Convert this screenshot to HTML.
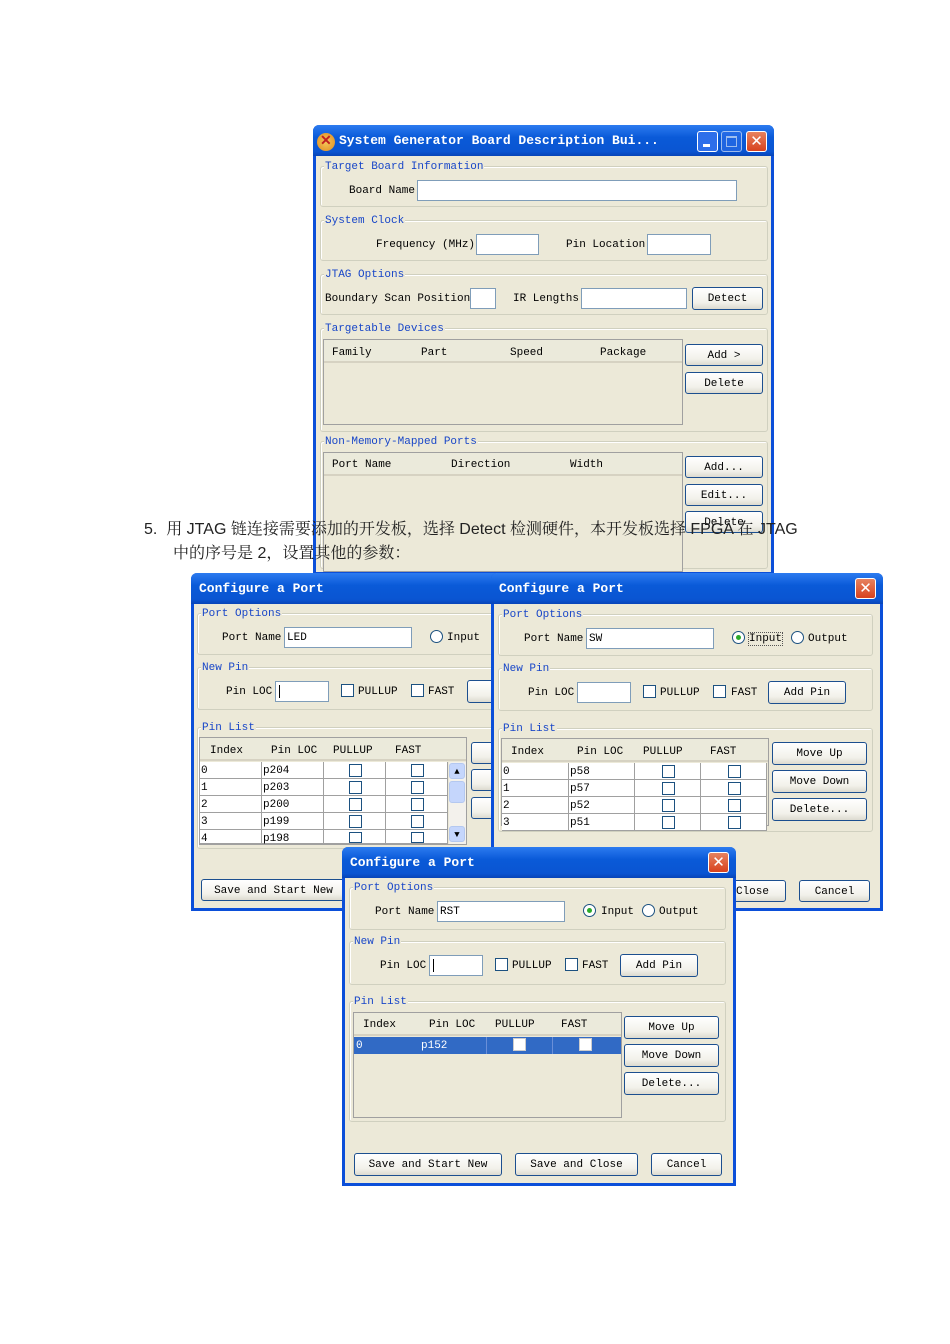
<!DOCTYPE html>
<html><head><meta charset="utf-8"><style>
body{margin:0;width:950px;height:1344px;background:#fff;position:relative;overflow:hidden;font-family:"Liberation Mono","Noto Sans CJK SC",monospace;font-size:11px;color:#000}
div,span{position:absolute;box-sizing:border-box}
.w{background:#ECE9D8;border:3px solid #0B4FD9;border-top:none;border-radius:6px 6px 0 0}
.tb{background:linear-gradient(#2C7BF0,#0A5AD8 40%,#0A55D2 85%,#0844B8);border-radius:6px 6px 0 0;color:#fff;font-weight:bold;font-size:13px;padding:0 0 0 8px;line-height:32px;white-space:nowrap}
.g{border:1px solid #D0D0BF;border-radius:3px;box-shadow:inset 1px 1px 0 #fff}
.gl{top:-7px;left:3px;background:#ECE9D8;color:#1846C8;padding:0 1px;white-space:nowrap;line-height:14px}
.in{background:#fff;border:1px solid #7F9DB9}
.bt{border:1px solid #1C4F8F;border-radius:3px;background:linear-gradient(#fff,#F2F1EA 70%,#DCDAD0);text-align:center;white-space:nowrap;padding-top:1px}
.t{white-space:nowrap;margin-top:2px}
.x{width:21px;height:21px;border:1px solid #fff;border-radius:3px;background:linear-gradient(#E6825F,#D8421E);color:#fff;font:bold 15px "DejaVu Sans",sans-serif;text-align:center;line-height:19px}
.cb{width:13px;height:13px;border:1px solid #1C5180;background:#fff}
.rd{width:13px;height:13px;border:1px solid #1C5180;border-radius:50%;background:#fff}
.rd.on::after{content:"";position:absolute;left:3px;top:3px;width:5px;height:5px;border-radius:50%;background:#2BAA2B}
.hd{background:#EBEADB;border-bottom:2px solid #D6D2C2}
.cell{background:#fff;border-right:1px solid #A0A0A0;border-bottom:1px solid #A0A0A0;white-space:nowrap;padding-left:1px;line-height:18px}
.cn{font-family:"Liberation Sans","Noto Serif CJK SC",serif;font-size:16px;color:#222;white-space:nowrap}
</style></head><body>

<!-- Window 1 -->
<div class="w" style="left:313px;top:125px;width:461px;height:450px"></div>
<div class="tb" style="left:313px;top:125px;width:461px;height:31px;padding-left:26px">System Generator Board Description Bui...</div>
<div style="left:317px;top:133px;width:18px;height:18px;border-radius:50%;background:radial-gradient(#F4C85A,#E08A20)"><span style="left:3px;top:-1px;color:#C02020;font:bold 14px sans-serif">✕</span></div>
<div style="left:697px;top:131px;width:21px;height:21px;border:1px solid #fff;border-radius:3px;background:#2E6FEA"><span style="left:5px;top:12px;width:7px;height:3px;background:#fff"></span></div>
<div style="left:721px;top:131px;width:21px;height:21px;border:1px solid #fff;border-radius:3px;background:#2E6FEA;opacity:.6"><span style="left:4px;top:4px;width:11px;height:11px;border:1px solid #fff;border-top-width:2px"></span></div>
<div class="x" style="left:746px;top:131px">✕</div>

<div class="g" style="left:320px;top:166px;width:448px;height:41px"><span class="gl">Target Board Information</span></div>
<span class="t" style="left:349px;top:183px">Board Name</span>
<div class="in" style="left:417px;top:180px;width:320px;height:21px"></div>

<div class="g" style="left:320px;top:220px;width:448px;height:41px"><span class="gl">System Clock</span></div>
<span class="t" style="left:376px;top:237px">Frequency (MHz)</span>
<div class="in" style="left:476px;top:234px;width:63px;height:21px"></div>
<span class="t" style="left:566px;top:237px">Pin Location</span>
<div class="in" style="left:647px;top:234px;width:64px;height:21px"></div>

<div class="g" style="left:320px;top:274px;width:448px;height:41px"><span class="gl">JTAG Options</span></div>
<span class="t" style="left:325px;top:291px">Boundary Scan Position</span>
<div class="in" style="left:470px;top:288px;width:26px;height:21px"></div>
<span class="t" style="left:513px;top:291px">IR Lengths</span>
<div class="in" style="left:581px;top:288px;width:106px;height:21px"></div>
<div class="bt" style="left:692px;top:287px;width:71px;height:23px;line-height:21px">Detect</div>

<div class="g" style="left:320px;top:328px;width:448px;height:104px"><span class="gl">Targetable Devices</span></div>
<div class="in" style="left:323px;top:339px;width:360px;height:86px;background:#ECE9D8;border-color:#A0A0A0"></div>
<div class="hd" style="left:324px;top:340px;width:358px;height:23px"></div>
<span class="t" style="left:332px;top:345px">Family</span><span class="t" style="left:421px;top:345px">Part</span><span class="t" style="left:510px;top:345px">Speed</span><span class="t" style="left:600px;top:345px">Package</span>
<div class="bt" style="left:685px;top:344px;width:78px;height:22px;line-height:20px">Add &gt;</div>
<div class="bt" style="left:685px;top:372px;width:78px;height:22px;line-height:20px">Delete</div>

<div class="g" style="left:320px;top:441px;width:448px;height:128px"><span class="gl">Non-Memory-Mapped Ports</span></div>
<div class="in" style="left:323px;top:452px;width:360px;height:120px;background:#ECE9D8;border-color:#A0A0A0"></div>
<div class="hd" style="left:324px;top:453px;width:358px;height:23px"></div>
<span class="t" style="left:332px;top:457px">Port Name</span><span class="t" style="left:451px;top:457px">Direction</span><span class="t" style="left:570px;top:457px">Width</span>
<div class="bt" style="left:685px;top:456px;width:78px;height:22px;line-height:20px">Add...</div>
<div class="bt" style="left:685px;top:484px;width:78px;height:22px;line-height:20px">Edit...</div>
<div class="bt" style="left:685px;top:511px;width:78px;height:22px;line-height:20px">Delete</div>

<span class="cn" style="left:144px;top:516px">5.&nbsp; 用 JTAG 链连接需要添加的开发板，选择 Detect 检测硬件，本开发板选择 FPGA 在 JTAG</span>
<span class="cn" style="left:173px;top:540px">中的序号是 2，设置其他的参数：</span>

<!-- Left dialog -->
<div class="w" style="left:191px;top:573px;width:310px;height:338px"></div>
<div class="tb" style="left:191px;top:573px;width:310px;height:31px">Configure a Port</div>
<div class="g" style="left:197px;top:613px;width:300px;height:42px"><span class="gl">Port Options</span></div>
<span class="t" style="left:222px;top:630px">Port Name</span>
<div class="in" style="left:284px;top:627px;width:128px;height:21px"><span style="left:2px;top:4px">LED</span></div>
<div class="rd" style="left:430px;top:630px"></div><span class="t" style="left:447px;top:630px">Input</span>
<div class="g" style="left:197px;top:667px;width:300px;height:43px"><span class="gl">New Pin</span></div>
<span class="t" style="left:226px;top:684px">Pin LOC</span>
<div class="in" style="left:275px;top:681px;width:54px;height:21px"><span style="left:3px;top:3px;width:1px;height:13px;background:#000"></span></div>
<div class="cb" style="left:341px;top:684px"></div><span class="t" style="left:358px;top:684px">PULLUP</span>
<div class="cb" style="left:411px;top:684px"></div><span class="t" style="left:428px;top:684px">FAST</span>
<div class="bt" style="left:467px;top:680px;width:40px;height:23px"></div>
<div class="g" style="left:197px;top:727px;width:300px;height:122px"><span class="gl">Pin List</span></div>
<div class="in" style="left:199px;top:737px;width:268px;height:108px;background:#ECE9D8;border-color:#A0A0A0"></div>
<div class="hd" style="left:200px;top:738px;width:266px;height:23px"></div>
<span class="t" style="left:210px;top:743px">Index</span><span class="t" style="left:271px;top:743px">Pin LOC</span><span class="t" style="left:333px;top:743px">PULLUP</span><span class="t" style="left:395px;top:743px">FAST</span>
<div class="cell" style="left:200px;top:762px;width:62px;height:17px">0</div><div class="cell" style="left:262px;top:762px;width:62px;height:17px">p204</div><div class="cell" style="left:324px;top:762px;width:62px;height:17px"></div><div class="cell" style="left:386px;top:762px;width:62px;height:17px"></div>
<div class="cell" style="left:200px;top:779px;width:62px;height:17px">1</div><div class="cell" style="left:262px;top:779px;width:62px;height:17px">p203</div><div class="cell" style="left:324px;top:779px;width:62px;height:17px"></div><div class="cell" style="left:386px;top:779px;width:62px;height:17px"></div>
<div class="cell" style="left:200px;top:796px;width:62px;height:17px">2</div><div class="cell" style="left:262px;top:796px;width:62px;height:17px">p200</div><div class="cell" style="left:324px;top:796px;width:62px;height:17px"></div><div class="cell" style="left:386px;top:796px;width:62px;height:17px"></div>
<div class="cell" style="left:200px;top:813px;width:62px;height:17px">3</div><div class="cell" style="left:262px;top:813px;width:62px;height:17px">p199</div><div class="cell" style="left:324px;top:813px;width:62px;height:17px"></div><div class="cell" style="left:386px;top:813px;width:62px;height:17px"></div>
<div class="cell" style="left:200px;top:830px;width:62px;height:14px">4</div><div class="cell" style="left:262px;top:830px;width:62px;height:14px">p198</div><div class="cell" style="left:324px;top:830px;width:62px;height:14px"></div><div class="cell" style="left:386px;top:830px;width:62px;height:14px"></div>
<div class="cb" style="left:349px;top:764px"></div><div class="cb" style="left:411px;top:764px"></div>
<div class="cb" style="left:349px;top:781px"></div><div class="cb" style="left:411px;top:781px"></div>
<div class="cb" style="left:349px;top:798px"></div><div class="cb" style="left:411px;top:798px"></div>
<div class="cb" style="left:349px;top:815px"></div><div class="cb" style="left:411px;top:815px"></div>
<div class="cb" style="left:349px;top:832px;height:11px"></div><div class="cb" style="left:411px;top:832px;height:11px"></div>
<div style="left:449px;top:762px;width:17px;height:82px;background:#F3F1EC"></div>
<div class="bt" style="left:449px;top:763px;width:16px;height:16px;font-size:9px;line-height:14px;border-color:#B4C8F0;background:#C5D6FC">▲</div>
<div class="bt" style="left:449px;top:781px;width:16px;height:22px;border-color:#B4C8F0;background:#C5D6FC"></div>
<div class="bt" style="left:449px;top:826px;width:16px;height:16px;font-size:9px;line-height:14px;border-color:#B4C8F0;background:#C5D6FC">▼</div>
<div class="bt" style="left:471px;top:742px;width:25px;height:22px"></div>
<div class="bt" style="left:471px;top:769px;width:25px;height:22px"></div>
<div class="bt" style="left:471px;top:797px;width:25px;height:22px"></div>
<div class="bt" style="left:201px;top:879px;width:145px;height:22px;line-height:20px">Save and Start New</div>

<!-- Right dialog -->
<div class="w" style="left:491px;top:573px;width:392px;height:338px"></div>
<div class="tb" style="left:491px;top:573px;width:392px;height:31px">Configure a Port</div>
<div class="x" style="left:855px;top:578px">✕</div>
<div class="g" style="left:498px;top:614px;width:375px;height:42px"><span class="gl">Port Options</span></div>
<span class="t" style="left:524px;top:631px">Port Name</span>
<div class="in" style="left:586px;top:628px;width:128px;height:21px"><span style="left:2px;top:4px">SW</span></div>
<div class="rd on" style="left:732px;top:631px"></div><span class="t" style="left:749px;top:631px;outline:1px dotted #555">Input</span>
<div class="rd" style="left:791px;top:631px"></div><span class="t" style="left:808px;top:631px">Output</span>
<div class="g" style="left:498px;top:668px;width:375px;height:43px"><span class="gl">New Pin</span></div>
<span class="t" style="left:528px;top:685px">Pin LOC</span>
<div class="in" style="left:577px;top:682px;width:54px;height:21px"></div>
<div class="cb" style="left:643px;top:685px"></div><span class="t" style="left:660px;top:685px">PULLUP</span>
<div class="cb" style="left:713px;top:685px"></div><span class="t" style="left:731px;top:685px">FAST</span>
<div class="bt" style="left:768px;top:681px;width:78px;height:23px;line-height:21px">Add Pin</div>
<div class="g" style="left:498px;top:728px;width:375px;height:104px"><span class="gl">Pin List</span></div>
<div class="in" style="left:501px;top:738px;width:268px;height:88px;background:#ECE9D8;border-color:#A0A0A0"></div>
<div class="hd" style="left:502px;top:739px;width:266px;height:23px"></div>
<span class="t" style="left:511px;top:744px">Index</span><span class="t" style="left:577px;top:744px">Pin LOC</span><span class="t" style="left:643px;top:744px">PULLUP</span><span class="t" style="left:710px;top:744px">FAST</span>
<div class="cell" style="left:502px;top:763px;width:67px;height:17px">0</div><div class="cell" style="left:569px;top:763px;width:66px;height:17px">p58</div><div class="cell" style="left:635px;top:763px;width:66px;height:17px"></div><div class="cell" style="left:701px;top:763px;width:66px;height:17px"></div>
<div class="cell" style="left:502px;top:780px;width:67px;height:17px">1</div><div class="cell" style="left:569px;top:780px;width:66px;height:17px">p57</div><div class="cell" style="left:635px;top:780px;width:66px;height:17px"></div><div class="cell" style="left:701px;top:780px;width:66px;height:17px"></div>
<div class="cell" style="left:502px;top:797px;width:67px;height:17px">2</div><div class="cell" style="left:569px;top:797px;width:66px;height:17px">p52</div><div class="cell" style="left:635px;top:797px;width:66px;height:17px"></div><div class="cell" style="left:701px;top:797px;width:66px;height:17px"></div>
<div class="cell" style="left:502px;top:814px;width:67px;height:17px">3</div><div class="cell" style="left:569px;top:814px;width:66px;height:17px">p51</div><div class="cell" style="left:635px;top:814px;width:66px;height:17px"></div><div class="cell" style="left:701px;top:814px;width:66px;height:17px"></div>
<div class="cb" style="left:662px;top:765px"></div><div class="cb" style="left:728px;top:765px"></div>
<div class="cb" style="left:662px;top:782px"></div><div class="cb" style="left:728px;top:782px"></div>
<div class="cb" style="left:662px;top:799px"></div><div class="cb" style="left:728px;top:799px"></div>
<div class="cb" style="left:662px;top:816px"></div><div class="cb" style="left:728px;top:816px"></div>
<div class="bt" style="left:772px;top:742px;width:95px;height:23px;line-height:21px">Move Up</div>
<div class="bt" style="left:772px;top:770px;width:95px;height:23px;line-height:21px">Move Down</div>
<div class="bt" style="left:772px;top:798px;width:95px;height:23px;line-height:21px">Delete...</div>
<div class="bt" style="left:720px;top:880px;width:66px;height:22px;line-height:20px;text-align:right;padding-right:16px">Close</div>
<div class="bt" style="left:799px;top:880px;width:71px;height:22px;line-height:20px">Cancel</div>

<!-- Bottom dialog -->
<div class="w" style="left:342px;top:847px;width:394px;height:339px"></div>
<div class="tb" style="left:342px;top:847px;width:394px;height:31px">Configure a Port</div>
<div class="x" style="left:708px;top:852px">✕</div>
<div class="g" style="left:349px;top:887px;width:377px;height:43px"><span class="gl">Port Options</span></div>
<span class="t" style="left:375px;top:904px">Port Name</span>
<div class="in" style="left:437px;top:901px;width:128px;height:21px"><span style="left:2px;top:4px">RST</span></div>
<div class="rd on" style="left:583px;top:904px"></div><span class="t" style="left:601px;top:904px">Input</span>
<div class="rd" style="left:642px;top:904px"></div><span class="t" style="left:659px;top:904px">Output</span>
<div class="g" style="left:349px;top:941px;width:377px;height:44px"><span class="gl">New Pin</span></div>
<span class="t" style="left:380px;top:958px">Pin LOC</span>
<div class="in" style="left:429px;top:955px;width:54px;height:21px"><span style="left:3px;top:3px;width:1px;height:13px;background:#000"></span></div>
<div class="cb" style="left:495px;top:958px"></div><span class="t" style="left:512px;top:958px">PULLUP</span>
<div class="cb" style="left:565px;top:958px"></div><span class="t" style="left:582px;top:958px">FAST</span>
<div class="bt" style="left:620px;top:954px;width:78px;height:23px;line-height:21px">Add Pin</div>
<div class="g" style="left:349px;top:1001px;width:377px;height:121px"><span class="gl">Pin List</span></div>
<div class="in" style="left:353px;top:1012px;width:269px;height:106px;background:#ECE9D8;border-color:#A0A0A0"></div>
<div class="hd" style="left:354px;top:1013px;width:267px;height:23px"></div>
<span class="t" style="left:363px;top:1017px">Index</span><span class="t" style="left:429px;top:1017px">Pin LOC</span><span class="t" style="left:495px;top:1017px">PULLUP</span><span class="t" style="left:561px;top:1017px">FAST</span>
<div style="left:354px;top:1037px;width:267px;height:17px;background:#316AC5;color:#fff;line-height:18px;padding-left:2px">0<span style="left:67px;top:0">p152</span><span style="left:132px;top:0;width:1px;height:17px;background:#6A8FD8"></span><span style="left:198px;top:0;width:1px;height:17px;background:#6A8FD8"></span></div>
<div class="cb" style="left:513px;top:1038px;border-color:#ccc"></div><div class="cb" style="left:579px;top:1038px;border-color:#ccc"></div>
<div class="bt" style="left:624px;top:1016px;width:95px;height:23px;line-height:21px">Move Up</div>
<div class="bt" style="left:624px;top:1044px;width:95px;height:23px;line-height:21px">Move Down</div>
<div class="bt" style="left:624px;top:1072px;width:95px;height:23px;line-height:21px">Delete...</div>
<div class="bt" style="left:354px;top:1153px;width:148px;height:23px;line-height:21px">Save and Start New</div>
<div class="bt" style="left:515px;top:1153px;width:123px;height:23px;line-height:21px">Save and Close</div>
<div class="bt" style="left:651px;top:1153px;width:71px;height:23px;line-height:21px">Cancel</div>
</body></html>
